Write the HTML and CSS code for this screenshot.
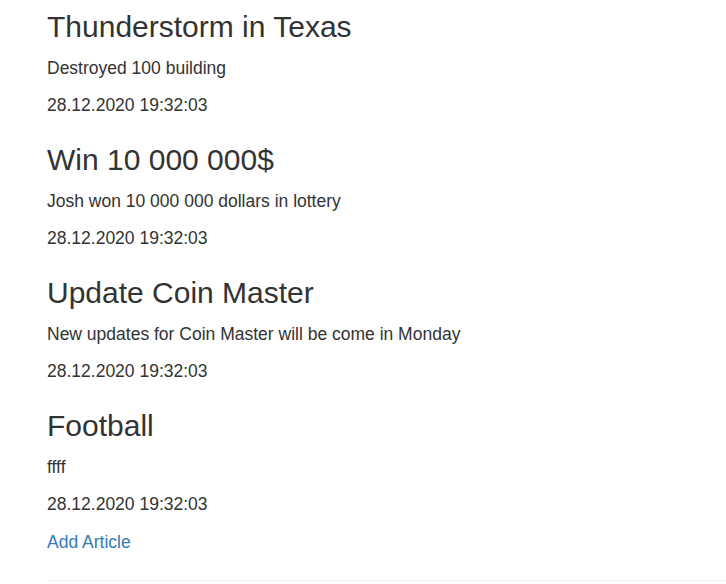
FILE: index.html
```html
<!DOCTYPE html>
<html>
<head>
<meta charset="utf-8">
<link rel="stylesheet" href="styles.css">
</head>
<body>
<div class="container">
  <div class="article">
    <h3 class="title">Thunderstorm in Texas</h3>
    <p class="text">Destroyed 100 building</p>
    <p class="text">28.12.2020 19:32:03</p>
  </div>
  <div class="article">
    <h3 class="title">Win 10 000 000$</h3>
    <p class="text">Josh won 10 000 000 dollars in lottery</p>
    <p class="text">28.12.2020 19:32:03</p>
  </div>
  <div class="article">
    <h3 class="title">Update Coin Master</h3>
    <p class="text">New updates for Coin Master will be come in Monday</p>
    <p class="text">28.12.2020 19:32:03</p>
  </div>
  <div class="article">
    <h3 class="title">Football</h3>
    <p class="text">ffff</p>
    <p class="text">28.12.2020 19:32:03</p>
  </div>
  <p class="text"><a class="link" href="#">Add Article</a></p>
  <hr class="rule">
</div>
</body>
</html>
```
FILE: styles.css
```css
html, body {
  margin: 0;
  padding: 0;
  background: #fff;
}
body {
  font-family: "Liberation Sans", Arial, Helvetica, sans-serif;
  font-size: 17.5px;
  line-height: 25px;
  color: #333;
}
.container {
  padding: 10px 0 0 47px;
}
.title {
  font-size: 30px;
  font-weight: 500;
  line-height: 33px;
  margin: 25px 0 12.5px;
}
.article:first-child .title {
  margin-top: 0;
}
.text {
  margin: 0 0 12.5px;
}
.link {
  color: #337ab7;
  text-decoration: none;
}
.rule {
  margin: 25px 0 0;
  border: 0;
  border-top: 1px solid #eee;
  height: 0;
}
```
